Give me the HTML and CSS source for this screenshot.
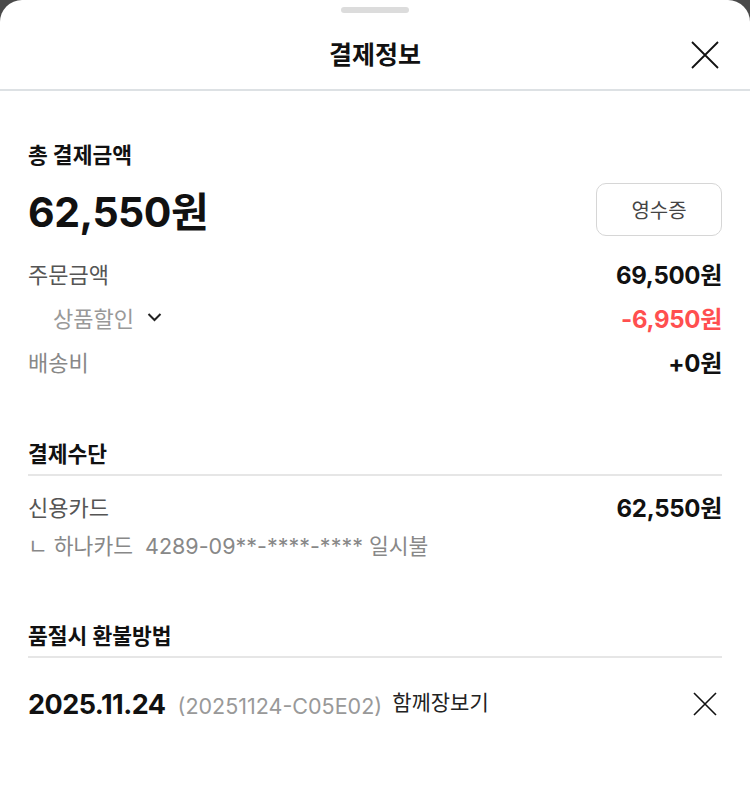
FILE: index.html
```html
<!DOCTYPE html>
<html lang="ko">
<head>
    <meta charset="UTF-8">
    <meta name="viewport" content="width=device-width, initial-scale=1.0">
    <title>결제정보</title>
    <link rel="stylesheet" href="styles.css">
</head>
<body>

    <div class="sheet">
        <div class="handle"></div>

        <!-- 상단 헤더 -->
        <div class="header">
            <h2>결제정보</h2>
            <button class="close-btn" aria-label="닫기">
                <svg width="28" height="28" viewBox="0 0 28 28"><path d="M1 1L27 27M27 1L1 27" stroke="#111" stroke-width="1.8" fill="none"/></svg>
            </button>
        </div>

        <div class="content">
            <!-- 총 결제금액 -->
            <div class="section-title first">총 결제금액</div>
            <div class="total-row">
                <span class="total">62,550원</span>
                <button class="receipt-btn">영수증</button>
            </div>
            <div class="row">
                <span class="label">주문금액</span>
                <span class="amount">69,500원</span>
            </div>
            <div class="row">
                <span class="label sub">상품할인
                    <svg class="chevron" width="15" height="10" viewBox="0 0 15 10"><path d="M1.5 2L7.5 8L13.5 2" stroke="#222" stroke-width="2" fill="none"/></svg>
                </span>
                <span class="amount red">-6,950원</span>
            </div>
            <div class="row">
                <span class="label light">배송비</span>
                <span class="amount">+0원</span>
            </div>

            <!-- 결제수단 -->
            <div class="section-title lined">결제수단</div>
            <div class="row pay">
                <span class="label">신용카드</span>
                <span class="amount">62,550원</span>
            </div>
            <div class="card-info">ㄴ 하나카드&nbsp; 4289-09**-****-**** 일시불</div>

            <!-- 품절시 환불방법 -->
            <div class="section-title lined last">품절시 환불방법</div>
            <div class="order-row">
                <div class="order-info">
                    <span class="date">2025.11.24</span>
                    <span class="order-no">(20251124-C05E02)</span>
                    <span class="store">함께장보기</span>
                </div>
                <svg width="24" height="24" viewBox="0 0 24 24"><path d="M1 1L23 23M23 1L1 23" stroke="#111" stroke-width="1.6" fill="none"/></svg>
            </div>
        </div>
    </div>

</body>
</html>
```

FILE: styles.css
```css
body {
    margin: 0;
    background-color: #4a4a4a;
    font-family: Inter, "Noto Sans CJK KR", sans-serif;
    color: #111;
}
.sheet {
    background: white;
    border-radius: 22px 22px 0 0;
    height: 810px;
    overflow: hidden;
}
.handle {
    width: 68px;
    height: 6px;
    margin: 7px auto 0;
    background-color: #dcdcdc;
    border-radius: 3px;
}
.header {
    display: flex;
    align-items: center;
    justify-content: center;
    height: 76px;
    border-bottom: 2px solid #dde1e4;
    position: relative;
}
.header h2 {
    margin: 0;
    font-size: 25px;
    font-weight: 700;
    margin-top: 4px;
}
.close-btn {
    position: absolute;
    right: 31px;
    top: 28px;
    padding: 0;
    border: none;
    background: none;
    width: 28px;
    height: 28px;
}
.content {
    padding: 0 28px;
}
.section-title {
    font-size: 21.5px;
    font-weight: 700;
    line-height: 40px;
    margin-top: 51px;
}
.section-title.first {
    margin-top: 44px;
}
.section-title.lined {
    border-bottom: 2px solid #e6e6e6;
}
.section-title.last {
    margin-top: 55px;
}
.total-row {
    display: flex;
    justify-content: space-between;
    align-items: center;
    margin-top: 4px;
}
.total {
    font-size: 41px;
    font-weight: 700;
    letter-spacing: -0.5px;
}
.receipt-btn {
    width: 126px;
    height: 53px;
    background: white;
    border: 1.5px solid #d6d6d6;
    border-radius: 10px;
    font-family: inherit;
    font-size: 20px;
    color: #444;
}
.row {
    display: flex;
    justify-content: space-between;
    align-items: center;
    height: 44px;
}
.total-row + .row {
    margin-top: 12px;
}
.row.pay {
    margin-top: 8px;
}
.label {
    font-size: 22px;
    color: #555;
}
.label.sub {
    padding-left: 25px;
    color: #999;
    display: flex;
    align-items: center;
    gap: 13px;
}
.label.light {
    color: #888;
}
.amount {
    font-size: 24px;
    font-weight: 700;
    letter-spacing: -0.3px;
}
.amount.red {
    color: #ff4f4f;
}
.card-info {
    font-size: 21.5px;
    color: #888;
    line-height: 30px;
    margin-top: 3px;
}
.order-row {
    display: flex;
    justify-content: space-between;
    align-items: center;
    height: 48px;
    margin-top: 22px;
    padding-right: 5px;
}
.order-info {
    display: flex;
    align-items: baseline;
    gap: 12px;
}
.date {
    font-size: 27px;
    font-weight: 700;
    letter-spacing: -0.5px;
}
.order-no {
    font-size: 21.5px;
    color: #999;
}
.store {
    font-size: 21px;
    color: #222;
    position: relative;
    top: -4px;
    margin-left: -2px;
}
```
